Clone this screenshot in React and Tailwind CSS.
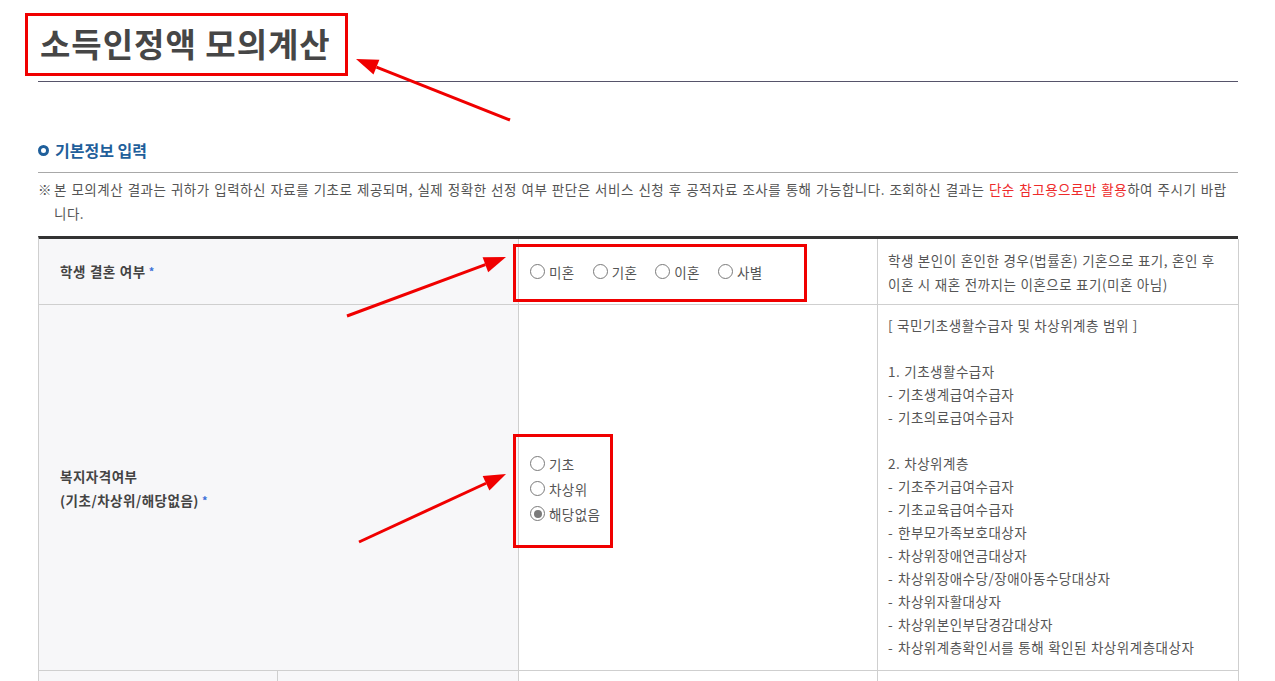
import React from "react";

const FONT = { fontFamily: '"Noto Sans CJK KR", "Noto Sans", sans-serif' };

function Radio({ label, checked }) {
  return (
    <span className="flex items-center gap-[4px]">
      <span className="w-[15px] h-[15px] rounded-full border border-[#7a7a7a] bg-white flex items-center justify-center shrink-0">
        {checked && <span className="w-[8px] h-[8px] rounded-full bg-[#7a7a7a]" />}
      </span>
      <span className="text-[13.5px] tracking-[0.4px] text-[#555] leading-[20px]">{label}</span>
    </span>
  );
}

function Star() {
  return <span className="text-[#3a6fd8] text-[11px] ml-[3px] align-top">*</span>;
}

const welfare = [
  ["", "[ 국민기초생활수급자 및 차상위계층 범위 ]"],
  ["", ""],
  ["", "1. 기초생활수급자"],
  ["-", "기초생계급여수급자"],
  ["-", "기초의료급여수급자"],
  ["", ""],
  ["", "2. 차상위계층"],
  ["-", "기초주거급여수급자"],
  ["-", "기초교육급여수급자"],
  ["-", "한부모가족보호대상자"],
  ["-", "차상위장애연금대상자"],
  ["-", "차상위장애수당/장애아동수당대상자"],
  ["-", "차상위자활대상자"],
  ["-", "차상위본인부담경감대상자"],
  ["-", "차상위계층확인서를 통해 확인된 차상위계층대상자"],
];

function Arrow({ x1, y1, x2, y2 }) {
  const ang = Math.atan2(y2 - y1, x2 - x1);
  const len = 22;
  const half = 8;
  const bx = x2 - len * Math.cos(ang);
  const by = y2 - len * Math.sin(ang);
  const px = -Math.sin(ang) * half;
  const py = Math.cos(ang) * half;
  return (
    <g>
      <line x1={x1} y1={y1} x2={bx} y2={by} stroke="#f00000" strokeWidth="3" />
      <polygon points={`${x2},${y2} ${bx + px},${by + py} ${bx - px},${by - py}`} fill="#f00000" />
    </g>
  );
}

export default function App() {
  return (
    <div className="relative w-[1275px] h-[681px] overflow-hidden bg-white" style={FONT}>
      <div className="pl-[38px] w-[1238px]">
        {/* Title */}
        <div className="h-[82px] border-b border-[#56546a]">
          <h1 className="pt-[21px] pl-[2px] text-[33px] tracking-[1px] leading-[44px] font-bold text-[#464646] whitespace-nowrap">
            소득인정액 모의계산
          </h1>
        </div>

        {/* Section heading */}
        <div className="mt-[58px] flex items-center gap-[6px] h-[20px]">
          <span className="w-[11px] h-[11px] rounded-full border-[3px] border-[#1f5f9b]" />
          <span className="text-[16px] font-bold text-[#1f5f9b] leading-[20px]">기본정보 입력</span>
        </div>
        <div className="mt-[12px] border-b border-[#a8a8a8]" />

        {/* Notice */}
        <p className="mt-[4px] text-[13.5px] leading-[24px] text-[#555] pl-[16px] -indent-[16px] tracking-[0.5px] [word-spacing:1px] whitespace-nowrap">
          <span className="inline-block w-[16px] indent-0 tracking-normal">※</span>
          본 모의계산 결과는 귀하가 입력하신 자료를 기초로 제공되며, 실제 정확한 선정 여부 판단은 서비스 신청 후 공적자료 조사를 통해 가능합니다. 조회하신 결과는{" "}
          <span className="text-[#ee2a2a]">단순 참고용으로만 활용</span>하여 주시기 바랍
          <br />
          니다.
        </p>

        {/* Table */}
        <div className="mt-[11px] border-t-[3px] border-[#333] border-l border-l-[#cfcfcf] grid grid-cols-[480px_359px_361px] text-[13.5px] tracking-[0.5px] [word-spacing:0.5px] text-[#555]">
          {/* Row 1 */}
          <div className="h-[66px] bg-[#f7f7f9] border-r border-b border-[#cfcfcf] flex items-center pl-[21px] font-bold text-[#444]">
            학생 결혼 여부<Star />
          </div>
          <div className="h-[66px] border-r border-b border-[#cfcfcf] flex items-center pl-[11px] gap-[18px]">
            <Radio label="미혼" />
            <Radio label="기혼" />
            <Radio label="이혼" />
            <Radio label="사별" />
          </div>
          <div className="h-[66px] border-r border-b border-[#cfcfcf] flex items-center pl-[10px] leading-[24px] whitespace-nowrap">
            <p>
              학생 본인이 혼인한 경우(법률혼) 기혼으로 표기, 혼인 후<br />
              이혼 시 재혼 전까지는 이혼으로 표기(미혼 아님)
            </p>
          </div>

          {/* Row 2 */}
          <div className="h-[366px] bg-[#f7f7f9] border-r border-b border-[#cfcfcf] flex items-center pl-[21px] font-bold text-[#444] leading-[24px]">
            <p>
              복지자격여부<br />
              (기초/차상위/해당없음)<Star />
            </p>
          </div>
          <div className="h-[366px] border-r border-b border-[#cfcfcf] flex flex-col justify-center pl-[11px] gap-[5px] pt-[2px]">
            <Radio label="기초" />
            <Radio label="차상위" />
            <Radio label="해당없음" checked />
          </div>
          <div className="h-[366px] border-r border-b border-[#cfcfcf] pl-[10px] pt-[9px] leading-[23px] whitespace-nowrap">
            {welfare.map(([d, t], i) => (
              <p key={i} className="h-[23px] flex">
                {d && <span className="w-[10px] shrink-0">{d}</span>}
                <span>{t}</span>
              </p>
            ))}
          </div>

          {/* Row 3 */}
          <div className="h-[60px] border-r border-b border-[#cfcfcf] grid grid-cols-[239px_240px]">
            <div className="bg-[#f7f7f9] border-r border-[#cfcfcf]" />
            <div className="bg-[#f7f7f9]" />
          </div>
          <div className="h-[60px] border-r border-b border-[#cfcfcf]" />
          <div className="h-[60px] border-r border-b border-[#cfcfcf]" />
        </div>
      </div>

      {/* Annotation overlays */}
      <div className="absolute left-[25px] top-[13px] w-[323px] h-[63px] border-[3px] border-[#f00000] pointer-events-none" />
      <div className="absolute left-[513px] top-[244px] w-[294px] h-[58px] border-[3px] border-[#f00000] pointer-events-none" />
      <div className="absolute left-[513px] top-[434px] w-[100px] h-[114px] border-[3px] border-[#f00000] pointer-events-none" />
      <svg className="absolute left-0 top-0 pointer-events-none" width="1275" height="681">
        <Arrow x1={510} y1={120} x2={356} y2={59} />
        <Arrow x1={347} y1={316} x2={506} y2={257} />
        <Arrow x1={359} y1={542} x2={506} y2={474} />
      </svg>
    </div>
  );
}
